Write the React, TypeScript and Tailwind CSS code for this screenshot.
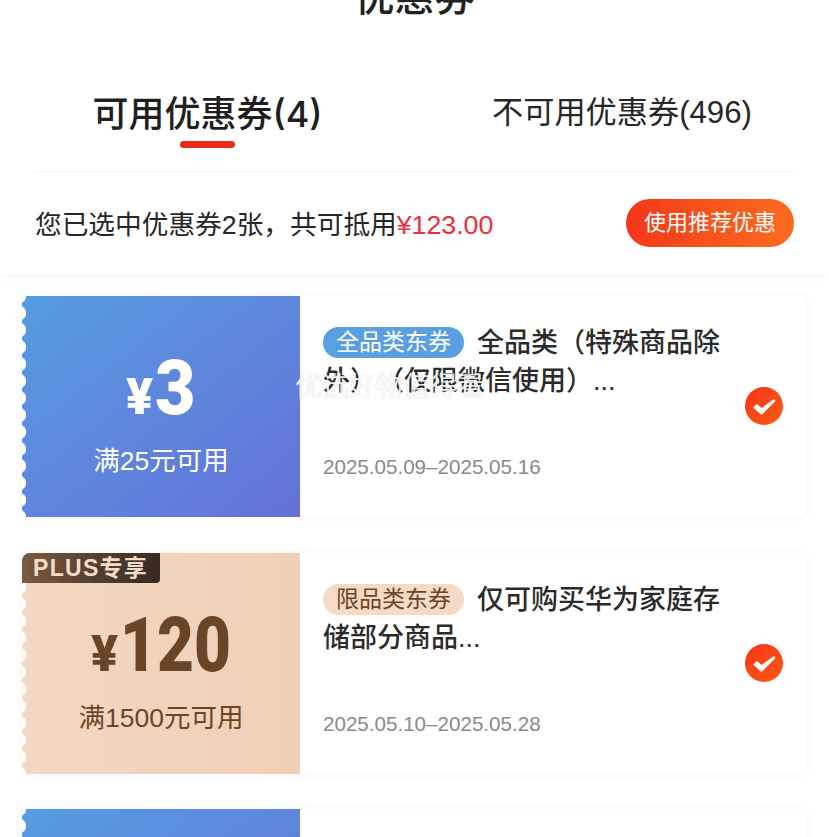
const cjk = "font-['Liberation_Sans','Noto_Sans_CJK_SC',sans-serif]";

interface Coupon {
  amount: string;
  amountClass: string;
  condition: string;
  tag: string;
  title: string[];
  dates: string;
  plus?: boolean;
}

const coupons: Coupon[] = [
  {
    amount: "3",
    amountClass: "scale-x-[0.92] mr-[-3px]",
    condition: "满25元可用",
    tag: "全品类东券",
    title: ["全品类（特殊商品除", "外）（仅限微信使用）..."],
    dates: "2025.05.09–2025.05.16",
  },
  {
    amount: "120",
    amountClass: "scale-x-[0.84] mr-[-21px]",
    condition: "满1500元可用",
    tag: "限品类东券",
    title: ["仅可购买华为家庭存", "储部分商品..."],
    dates: "2025.05.10–2025.05.28",
    plus: true,
  },
];

// white bites taken out of the coupon's left side
const ScallopEdge = () => (
  <div className="absolute left-0 top-0 bottom-0 w-[6px] bg-[radial-gradient(circle_at_-3px_50%,#ffffff_7px,transparent_7.5px)] bg-[length:6px_17px] bg-[position:0_-8.5px]" />
);

const CheckBadge = () => (
  <div className="absolute right-[24px] top-[91px] w-[38px] h-[38px] rounded-full bg-gradient-to-br from-[#f5311a] to-[#ff5a14]">
    <svg viewBox="0 0 38 38" className="w-full h-full" fill="#ffffff">
      <path d="M8 20.5 L12 17 L16.5 21 L29 12 L30.5 14 L16.5 28 Z" strokeLinejoin="round" />
    </svg>
  </div>
);

const CouponCard = ({ coupon }: { coupon: Coupon }) => {
  const { plus } = coupon;
  return (
    <div className="flex h-[221px] shadow-[0_0_8px_rgba(0,0,0,0.05)] rounded-r-lg bg-white">
      <div
        className={`relative w-[278px] shrink-0 flex flex-col items-center ${
          plus
            ? "bg-gradient-to-r from-[#f3d8c3] to-[#f0cfb6] text-[#6b4527]"
            : "bg-gradient-to-br from-[#559ce2] to-[#6470d8] text-white"
        }`}
      >
        <ScallopEdge />
        {plus && (
          <div className="absolute left-0 top-0 w-[138px] h-[30px] rounded-tl-lg rounded-br-[4px] bg-gradient-to-r from-[#7a5a42] to-[#352a24] text-[#f6dcc5] text-[23px] leading-[30px] font-semibold pl-[11px] tracking-[1.3px] whitespace-nowrap">
            PLUS专享
          </div>
        )}
        <div className="flex items-baseline mt-[52px] h-[80px] font-['Roboto',sans-serif] font-black">
          <span className="text-[50px] leading-[50px] mr-[2px]">¥</span>
          <span className={`inline-block origin-left text-[76px] leading-[80px] ${coupon.amountClass}`}>
            {coupon.amount}
          </span>
        </div>
        <div className="text-[26.5px] leading-[36px] mt-[15px] whitespace-nowrap">{coupon.condition}</div>
      </div>
      <div className="relative flex-1 pl-[23px] pt-[28px]">
        <div className="text-[27px] leading-[38px] font-medium text-[#2b2b2b] whitespace-nowrap [text-spacing-trim:space-all]">
          <span
            className={`inline-block align-[2px] w-[141px] h-[31px] rounded-full text-[23px] leading-[31px] font-normal text-center mr-[13px] ${
              plus ? "bg-[#f5dac5] text-[#6b4527]" : "bg-[#5a9fe2] text-white"
            }`}
          >
            {coupon.tag}
          </span>
          {coupon.title[0]}
          <br />
          {coupon.title[1]}
        </div>
        <div className="text-[20.6px] leading-[28px] text-[#8a8a8a] mt-[53px]">{coupon.dates}</div>
        <CheckBadge />
      </div>
    </div>
  );
};

export default function App() {
  return (
    <div className={`relative w-[829px] h-[837px] overflow-hidden bg-white ${cjk}`}>
      <div className="h-[274px] shadow-[0_2px_10px_rgba(0,0,0,0.04)] relative">
        <div className="h-[18px] overflow-hidden flex justify-center">
          <div className="text-[40px] leading-[50px] font-medium text-[#222] -mt-[28px]">优惠券</div>
        </div>
        <div className="flex mt-[70px] h-[84px] mx-[35px] border-b border-[#f3f3f3]">
          <div className="w-[345px] flex flex-col items-center pt-[1px]">
            <div className="font-['Inter','Noto_Sans_CJK_SC',sans-serif] text-[36px] leading-[50px] font-medium text-[#1f1f1f] whitespace-nowrap">
              可用优惠券(4)
            </div>
            <div className="w-[55px] h-[7px] mt-[2px] rounded-full bg-[#ee2a1a]" />
          </div>
          <div className="flex-1 pl-[112px] pt-[2px] text-[31.2px] leading-[46px] text-[#262626] whitespace-nowrap">
            不可用优惠券(496)
          </div>
        </div>
        <div className="flex items-center justify-between h-[102px] pl-[35px] pr-[35px]">
          <div className="text-[26.7px] text-[#262626] whitespace-nowrap mt-[4px]">
            您已选中优惠券2张，共可抵用<span className="text-[#e8303a]">¥123.00</span>
          </div>
          <div className="w-[168px] h-[48px] rounded-full bg-gradient-to-r from-[#f4351a] to-[#fb6b1e] text-white text-[22px] leading-[48px] text-center">
            使用推荐优惠
          </div>
        </div>
      </div>
      <div className="flex flex-col gap-[35.5px] pl-[22px] pr-[22px] pt-[22px]">
        {coupons.map((c) => (
          <CouponCard key={c.tag} coupon={c} />
        ))}
        <div className="flex h-[221px] rounded-r-lg bg-white shadow-[0_0_8px_rgba(0,0,0,0.05)]">
          <div className="relative w-[278px] shrink-0 bg-gradient-to-br from-[#559ce2] to-[#6470d8]">
            <ScallopEdge />
          </div>
        </div>
      </div>
      {/* watermark over the first coupon */}
      <div className="absolute left-[295px] top-[371px] text-[27px] leading-[32px] text-white/90 [text-shadow:0_0_1px_rgba(0,0,0,0.25)] whitespace-nowrap">
        优选好物值得看
      </div>
    </div>
  );
}
